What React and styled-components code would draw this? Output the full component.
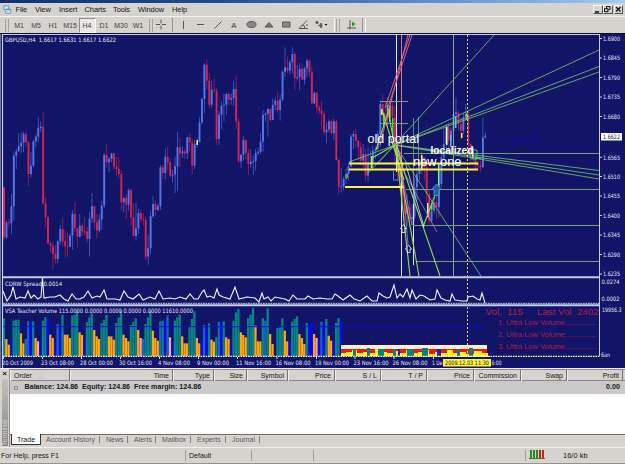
import React from 'react';
import styled, { createGlobalStyle } from 'styled-components';

// candles: close, high, low measured in thirds of a pixel below the pane top
const CANDLES = `610,460,620 565,560,615 568,555,580 517,480,600 365,355,560 352,345,405 337,297,352
326,295,358 300,293,355 325,293,338 420,320,455 395,355,430 322,318,400 308,300,340 282,250,325
278,262,295 508,235,512 550,490,580 628,545,630 635,625,655 660,622,705 675,632,690 622,620,688
585,573,632 622,550,637 637,590,668 638,598,668 605,597,640 540,528,647 583,503,595 608,582,640
575,540,612 592,568,605 592,550,605 615,578,627 553,533,668 517,478,567 565,515,585 590,540,612
557,540,595 515,500,587 363,357,522 385,328,400 375,368,415 358,357,385 398,357,405 405,368,425
420,370,433 505,408,530 492,490,535 512,480,555 468,463,530 550,463,575 606,507,608 583,507,620
537,525,600 555,527,565 558,537,575 668,547,678 643,603,692 547,530,660 510,487,552 528,500,545
517,508,532 400,393,528 417,392,435 368,343,437 385,338,410 425,373,430 422,407,445 397,368,477
340,293,470 358,312,400 352,337,372 358,343,375 310,308,375 325,297,352 395,315,420 330,318,405
325,313,342 265,250,318 195,192,272 92,88,237 140,76,165 212,117,222 167,140,220 170,135,178
315,162,332 242,230,333 215,202,285 212,180,262 180,178,242 197,175,212 192,178,212 165,140,215
262,124,285 382,255,385 362,360,402 318,305,380 357,317,375 390,345,423 383,345,400 382,365,423
357,345,410 353,342,363 323,298,360 243,228,353 240,233,262 225,222,308 258,225,263 213,193,243
200,190,228 228,173,237 197,183,260 113,110,202 100,40,128 110,68,117 85,78,122 60,40,118
132,54,166 130,93,140 105,87,168 137,90,138 103,98,152 80,72,130 115,77,130 208,98,210
177,172,210 220,173,237 230,213,240 240,202,285 295,232,302 287,265,328 262,257,295 298,257,302
262,255,318 378,258,380 458,375,482 457,403,475 435,428,470 420,403,450 398,385,440 308,300,400
300,290,345 320,285,340 340,318,380 380,325,395 360,330,400 425,345,440 390,340,445 385,350,405
350,335,400 345,338,375 300,290,350 210,200,340 240,182,260 250,205,270 220,190,280 215,200,250
250,205,310 330,215,400 400,300,440 440,340,470 500,400,530 540,460,560 520,480,575 555,500,580
550,510,575 460,430,560 420,400,500 390,375,440 370,350,420 400,370,440 480,390,510 560,470,570
530,500,565 505,490,540 520,470,555 450,400,550 370,350,460 330,280,380 280,270,350 320,265,345
290,280,350 240,225,320 235,190,260 270,230,290 290,250,315 250,235,300 240,210,260 330,230,350
360,325,385 375,350,390 385,360,405 395,380,410 400,380,412 310,250,400 305,295,315`
  .split(/\s+/)
  .map(c => c.split(',').map(Number));

// t teal, o orange, b blue, d dodger, s salmon
const VOLUME = `t133 o195 o212 b195 t140 t137 t137 o178 o208 d195 d142 b142 t142 o192 s202 b195 t140 t130
b133 o182 o192 b200 d150 b155 t122 o182 o182 o192 t125 t122 t110 o175 o183 b195 t145 t130 t118
o168 o187 o195 t148 t138 t122 o187 o187 o197 t147 t130 t108 o182 o192 o202 t153 t143 t133 o168
s192 d195 t150 t130 t110 o170 o192 o200 d142 t140 b140 d125 s190 b200 t140 t130 t122 o187 o208
o208 t157 t135 t112 o192 o208 b195 d153 b160 t148 o197 o203 t190 d143 b145 t142 o190 o195 b200
t140 t115 t105 o175 o183 o190 t132 t122 t102 o155 o202 o202 t133 d140 t103 o180 o210 b245 t162
t160 t133 o170 o202 b200 t143 t135 t127 o180 o192 o210 t147 b147 b147 o180 s192 b195 d143 b147
t135 o185 o200 b200 t147 t132 b142`.split(/\s+/);

const VOLUME_COLORS = { t: '#058585', o: '#ffa60b', b: '#0707f4', d: '#1467c6', s: '#ffaa83' };

const SPREAD = `3,291 7,301 11,295 13,287 16,299 20,297 25,298 28,291 31,298 34,295 38,299 41,297
42.5,278 44,298 50,297 55,297 60,295 64,299 68,301 72,294 76,299 80,299 84,297 88,291 92,298
97,296 100,297 104,290 107,299 115,299 120,300 124,291 128,297 133,299 139,294 143,300 150,297
155,299 159,291 163,299 170,298 175,299 180,297 186,299 190,294 194,299 198,299 202,292 204,290
207,297 210,296 214,298 217,289 219,295 223,297 230,299 235,287 239,299 247,297 255,298 259,302
262,293 264,299 268,297 271,301 275,297 280,298 285,299 289,301 293,295 297,299 305,299 308,296
313,299 320,298 327,299 332,299 335,294 338,296 343,300 350,295 354,299 360,301 367,296 372,301
377,301 379,293 383,296 387,298 390,297 394,285 397,298 400,294 403,297 407,289 410,298 412,290
416,299 420,295 424,296 430,300 435,299 437,290 441,298 445,300 450,301 452,294 455,300 462,301
467,301 468,297 473,296 477,299 480,300 482,293 485,303`;

const PRICES = [
  ['1.6900', 38.5], ['1.6845', 58], ['1.6790', 77.5], ['1.6735', 97], ['1.6680', 116.5],
  ['1.6565', 157.3], ['1.6510', 176.5], ['1.6455', 196], ['1.6400', 215.5], ['1.6345', 235],
  ['1.6290', 254.5], ['1.6235', 274],
];

const DATES = [
  ['20 Oct 2009', 2, 31], ['23 Oct 08:00', 41, 33], ['28 Oct 00:00', 80, 33],
  ['30 Oct 16:00', 119, 33], ['4 Nov 08:00', 158, 32], ['9 Nov 00:00', 197, 32],
  ['11 Nov 16:00', 236, 35], ['16 Nov 08:00', 275.5, 35], ['19 Nov 00:00', 315, 34],
  ['23 Nov 16:00', 353.5, 35], ['26 Nov 08:00', 392.5, 35], ['1 De', 432, 10.5],
];

const GREEN_RAYS = [
  'M378 163L494 35', 'M395 145L599 50', 'M395 145L599 66.5', 'M395 145L599 72',
  'M395 145L599 170.5', 'M395 145L599 175', 'M395 145L599 179', 'M395 145L367 174',
  'M395 145L349 162', 'M395 145L481 276',
];

const STEEP_RAYS = [
  'M396 148L410 276', 'M396 148L419 276', 'M396 148L440 276', 'M382 110L404 180',
  'M387 105L399 170', 'M423 227L437 190', 'M395 145L372 158', 'M390 106L376 150',
];

const LEVELS = [
  [380, 101.5, 408], [380, 123.5, 408], [404, 153.5, 599], [406, 189.5, 599],
  [413, 225.5, 599], [417, 261.5, 599],
];

const HIGHLIGHTS = [
  [196.5, 140, 5, '#f0ff9a'], [346.5, 174, 4, '#22df20'], [371, 156, 12, '#a7ff22'],
  [381, 109, 6, '#f6f632'], [383, 113, 13, '#52e23a'], [389, 107, 15, '#b7ee1a'],
  [392, 118, 18, '#63d32b'], [421, 155, 15, '#f7f35e'], [427, 203, 14, '#dff2c3'],
  [431, 203, 7, '#5ee32c'], [438, 163, 22, '#82ed9b'], [446, 127, 18, '#f0f7ff'],
  [450, 135, 12, '#39c6ee'], [455, 116, 12, '#22e4e0'], [461, 133, 5, '#ffe93a'],
  [466, 113, 7, '#55df39'], [472, 148, 10, '#e6fff2'],
];

const candleX = i => 4 + i * 2.443;
const candleY = v => 34 + v / 3;

const App = () => (
  <>
    <GlobalStyle/>
    <Window>
      <TitleBar/>
      <MenuBar>
        <MenuIcon/>
        <MenuItem width={19.5}>File</MenuItem>
        <MenuItem width={24}>View</MenuItem>
        <MenuItem width={25.5}>Insert</MenuItem>
        <MenuItem width={28.5}>Charts</MenuItem>
        <MenuItem width={25}>Tools</MenuItem>
        <MenuItem width={34}>Window</MenuItem>
        <MenuItem width={30}>Help</MenuItem>
        <WindowControls/>
      </MenuBar>
      <Toolbar/>
      <ChartWindow/>
      <Terminal/>
      <StatusBar/>
    </Window>
  </>
);

export default App;

const MenuIcon = () => (
  <MenuLogo viewBox="0 0 11 10">
    <path d="M1 .5h6v5H1z" fill="#d8eefa" stroke="#4a8bc0"/>
    <path d="M3.500 4.500h6v5h-6z" fill="#eefaff" stroke="#4a8bc0"/>
    <path d="M4 5h5" stroke="#4a8bc0"/>
    <path d="M5 8l1.500-2 1 1.500L9 6.500" fill="none" stroke="#60a080" strokeWidth=".7"/>
  </MenuLogo>
);

const WindowControls = () => (
  <Controls>
    <Control><svg width="9" height="9"><path d="M2 7h4" stroke="#111" strokeWidth="1.500"/></svg></Control>
    <Control>
      <svg width="9" height="9" fill="none" stroke="#111">
        <path d="M3.500 4V1.500h3.500v3H5.500M1.500 3.700h3.500v3H1.500z"/>
      </svg>
    </Control>
    <Control gap><svg width="9" height="9"><path d="M2 2l4.500 4.500M6.500 2L2 6.500" stroke="#111" strokeWidth="1.200"/></svg></Control>
  </Controls>
);

const Toolbar = () => (
  <Tools>
    <Grip/>
    {['M1', 'M5', 'H1', 'M15', 'H4', 'D1', 'M30', 'W1'].map(p => (
      <Period key={p} active={p === 'H4'}>{p}</Period>
    ))}
    <Grip left={2}/>
    <Tool width={17}><path d="M-1 5.500h4M5 5.500h4M4 .5v4M4 6.500v4"/></Tool>
    <Divider/>
    <Tool width={21}><path d="M6.500 2v8"/></Tool>
    <Tool width={14}><path d="M-1 5.500h7"/></Tool>
    <Tool width={20}><path d="M2.500 9.500l7-7"/></Tool>
    <Letter>A</Letter>
    <Tool width={18}><ellipse cx="6.500" cy="5.500" rx="4.500" ry="3" fill="#888"/></Tool>
    <Tool width={17}><path d="M2 8l4-4.500L10 8z" fill="#777"/></Tool>
    <Tool width={17}><path d="M2.500 3h7.500v5H2.500z" fill="#888"/></Tool>
    <Tool width={17}><path d="M10 1.500L2 9.500h9M5 6q3 0 3 3.500M9 6h2" fill="none"/></Tool>
    <Tool width={22}>
      <path d="M1.500 3.500h3M3 2v3M4.500 6.500h4M7 4v5" strokeWidth="1.600"/>
      <path d="M10.500 5h3L12 6.800z" fill="#111" stroke="none"/>
    </Tool>
    <Divider light/>
    <Grip/>
    <Tool width={19}>
      <path d="M5 1v9.500M2 9h9"/>
      <path d="M7 2.500L10.500 5 7 7.500z" fill="#1f9d31" stroke="none"/>
    </Tool>
    <Divider/>
    <Divider light/>
  </Tools>
);

const Tool = ({ width, children }) => (
  <ToolButton width={width}>
    <svg width="14" height="12" viewBox="0 0 14 12" stroke="#555" strokeWidth="1">{children}</svg>
  </ToolButton>
);

const ChartWindow = () => (
  <Chart viewBox="0 33 625 335">
    <rect y="33" width="625" height="335" fill="#111467"/>
    <path d="M0 33.500h625" stroke="#080a3c"/>
    <path d="M.5 34v334" stroke="#6d748f"/>
    <Candles/>
    <Drawings/>
    <Spread/>
    <Volume/>
    <g stroke="#c4cfec" fill="none">
      <path d="M2.500 368V34.500H599.500" strokeWidth="1.200"/>
      <path d="M599.500 34V356.500"/>
      <path d="M2 277.300H599M2 305.300H599" strokeWidth="2"/>
    </g>
    <PriceScale/>
    <TimeScale/>
    <ChartText x="5" y="41.500" textLength="111">GBPUSD,H4&nbsp; 1.6617 1.6631 1.6617 1.6622</ChartText>
  </Chart>
);

const Candles = () => (
  <g>
    {CANDLES.map(([close, high, low], i) => {
      const open = i ? CANDLES[i - 1][0] : 460;
      const x = candleX(i);
      const up = close < open;
      return (
        <g key={i} fill={up ? '#5577ea' : '#d32453'}>
          <rect x={x - .35} y={candleY(high)} width=".8" height={(low - high) / 3} opacity=".75"/>
          <rect x={x - .9} y={candleY(Math.min(open, close))} width="1.900" height={Math.max(1, Math.abs(close - open) / 3)}/>
        </g>
      );
    })}
    {HIGHLIGHTS.map(([x, y, h, fill]) => (
      <rect key={x} x={x} y={y} width="1.500" height={h} fill={fill}/>
    ))}
  </g>
);

const Drawings = () => (
  <g fill="none">
    <path d="M453.500 35V276" stroke="#8ba6a4"/>
    <path d="M396.500 35V172M401.500 172V276M413.500 204V265" stroke="#dfe5f4"/>
    <path d="M401.500 35V172" stroke="#d27590"/>
    <path d="M413.500 118V204M418.500 117V170" stroke="#7ba888" strokeWidth=".8"/>
    {LEVELS.map(([x1, y, x2]) => (
      <path key={y} d={`M${x1} ${y}H${x2}`} stroke="#74a079"/>
    ))}
    {GREEN_RAYS.map(d => <path key={d} d={d} stroke="#79bd6c" strokeWidth=".85"/>)}
    {STEEP_RAYS.map(d => <path key={d} d={d} stroke="#93e34c" strokeWidth="1.100"/>)}
    <path d="M380 145L408 35M388 107L412 35M385 108L410 35" stroke="#e56d76" strokeWidth=".9"/>
    <path d="M400 165L412 225M402 170L408 245M404 172L437 232" stroke="#d2909a" strokeWidth=".7"/>
    <path d="M406 165L424 227M397 146L403 166" stroke="#e2ecd0" strokeWidth=".8"/>
    <path d="M467.500 35V276" stroke="#e6e04e" strokeDasharray="2 2"/>
    <path d="M349 163.500H478M349 169.500H478M345 187H403.500" stroke="#fff238" strokeWidth="1.800"/>
    <g strokeWidth=".9">
      <path d="M403.500 224.500l3 4h-1.500v4h-3v-4h-1.500zM408.500 245l3 4H410v3.500h-3V249h-1.500z" stroke="#e9dfe6"/>
      <path d="M436.500 184l5 5.500h-2.500v6h-5v-6h-2.500z" stroke="#3ca2c3" fill="#245d9b"/>
      <path d="M393.500 171v9h9" stroke="#4aa6d8"/>
      <path d="M469 150h8v9h-6z" stroke="#35d19b"/>
    </g>
    <path d="M475 158h6" stroke="#45d965" strokeWidth="1.800"/>
    <Label x="367.500" y="143" textLength="51.500" size={12}>old portal</Label>
    <Label x="430.500" y="153.500" textLength="43" size={10} heavy>localized</Label>
    <Label x="413" y="166" textLength="48.500" size={12}>new one</Label>
    <TimerText x="500" y="141.500" textLength="38">{'< - -2:06:28'}</TimerText>
  </g>
);

const Spread = () => (
  <g>
    <polyline points={SPREAD} fill="none" stroke="#f2f4ff" strokeWidth="1.100"/>
    <path d="M3 303.300H599" stroke="#e7e9f6" strokeWidth=".9" strokeDasharray="1.800 .7"/>
    <path d="M467.500 279V303" stroke="#e6e04e" strokeDasharray="2 2"/>
    <ChartText x="5" y="286" textLength="57">CDRW Spread 0.0014</ChartText>
  </g>
);

const Volume = () => (
  <g>
    {VOLUME.map((bar, i) => {
      const y = 274 + bar.slice(1) / 3;
      return (
        <rect key={i} x={candleX(i) - 1.3} y={y} width="2.300" height={356 - y} fill={VOLUME_COLORS[bar[0]]}/>
      );
    })}
    <path d="M3 326.700H484" stroke="#0b10c8"/>
    <rect x="341" y="345" width="146" height="4" fill="#fff0cc"/>
    <rect x="341" y="349" width="146" height="7" fill="#f5130d"/>
    <path
      d="M341 356v-3h5v-1h6v-2h5v3h6v-1h7v1h5v-4h4v3h8v1h6v-2h6v2h7v-3h6v3h6v-1h7v-2h4v4h6v-2h5v1h7v-3h6v3h6v-1h7v2h8v-3h8v2h6v4z"
      fill="#f8f51a"
    />
    <path
      d="M353 350h3v6h-3zM367 348h3v8h-3zM378 349h6v7h-6zM393 349h3v7h-3zM407 349h7v7h-7zM422 348h6v8h-6zM457 349h3v7h-3zM469 348h4v8h-4z"
      fill="#078080"
    />
    <path d="M398 349h2v7h-2zM437 349h4v7h-4z" fill="#1b21c7"/>
    <path d="M3 356.300H599" stroke="#f6f6ff" strokeWidth="1.200" strokeDasharray="1.700 .8"/>
    <path d="M467.500 307V356" stroke="#e6e04e" strokeDasharray="2 2"/>
    <ChartText x="5" y="313.300" textLength="188">
      VSA Teacher Volume 115.0000 0.0000 0.0000 0.0000 0.0000 11610.0000
    </ChartText>
    <VolumeText x="485.500" y="314.500" textLength="37.500" size={9.5}>Vol.&nbsp; 115</VolumeText>
    <VolumeText x="537" y="314.500" textLength="61.500" size={9.5}>Last Vol&nbsp; 2402</VolumeText>
    {[1, 2, 3].map(n => (
      <g key={n}>
        <VolumeText x="498" y={313 + n * 12.1} textLength="67" size={7.5}>{n}. Ultra Low Volume</VolumeText>
        <VolumeText x="565.500" y={313 + n * 12.1} textLength="31" size={7.5}>................</VolumeText>
      </g>
    ))}
  </g>
);

const PriceScale = () => (
  <g>
    {PRICES.map(([price, y]) => (
      <g key={price}>
        <path d={`M600 ${y}h2`} stroke="#cdd3ea"/>
        <ChartText x="603" y={y + 2.3} textLength="17">{price}</ChartText>
      </g>
    ))}
    <rect x="601" y="133" width="21" height="7.500" fill="#fff"/>
    <ChartText x="603" y="139" textLength="17" dark>1.6622</ChartText>
    <ChartText x="601.500" y="284" textLength="18">0.0274</ChartText>
    <ChartText x="601.500" y="301" textLength="18">0.0002</ChartText>
    <ChartText x="602" y="311.500" textLength="19.500">19956.3</ChartText>
    <ChartText x="601" y="356.500" textLength="9">6an</ChartText>
  </g>
);

const TimeScale = () => (
  <g>
    {DATES.map(([date, x, width]) => (
      <g key={date}>
        <path d={`M${x + 1.5} 357v2`} stroke="#d9ddf0"/>
        <ChartText x={x} y="365" textLength={width}>{date}</ChartText>
      </g>
    ))}
    <ChartText x="491.500" y="365" textLength="10">6:00</ChartText>
    <rect x="443" y="359" width="48" height="7.500" fill="#fff333"/>
    <ChartText x="445" y="365" textLength="44" dark>2009.12.03 11:30</ChartText>
  </g>
);

const Terminal = () => (
  <TerminalPanel>
    <TerminalSide>
      <Close>×</Close>
      <SideTitle>Terminal</SideTitle>
    </TerminalSide>
    <TerminalBody>
      <Header>
        <Column first>Order <Sort>△</Sort></Column>
        <Column>Time</Column>
        <Column>Type</Column>
        <Column>Size</Column>
        <Column>Symbol</Column>
        <Column>Price</Column>
        <Column>S / L</Column>
        <Column>T / P</Column>
        <Column>Price</Column>
        <Column>Commission</Column>
        <Column>Swap</Column>
        <Column>Profit</Column>
      </Header>
      <Balance>
        <Dot/>
        <BalanceText>{'Balance: 124.86  Equity: 124.86  Free margin: 124.86'}</BalanceText>
        <span>0.00</span>
      </Balance>
      <Orders/>
      <Tabs>
        <ActiveTab>Trade</ActiveTab>
        <Tab width={60}>Account History</Tab>
        <Tab width={28}>News</Tab>
        <Tab width={28}>Alerts</Tab>
        <Tab width={35}>Mailbox</Tab>
        <Tab width={35}>Experts</Tab>
        <Tab width={34}>Journal</Tab>
      </Tabs>
    </TerminalBody>
  </TerminalPanel>
);

const StatusBar = () => (
  <Status>
    <StatusCell width={185}>For Help, press F1</StatusCell>
    <StatusCell width={66} line>Default</StatusCell>
    <StatusCell width={62} line/>
    <StatusCell width={212} line/>
    <StatusCell width={23} line>
      <svg width="16" height="9">
        <path d="M2 0v8M5 0v8M8 0v8" stroke="#258c2c" strokeWidth="2"/>
        <path d="M11 0v8M14 0v8" stroke="#b32a23" strokeWidth="2"/>
        <path d="M0 8.500h16" stroke="#66623c"/>
      </svg>
    </StatusCell>
    <Traffic>16/0 kb</Traffic>
  </Status>
);

const GlobalStyle = createGlobalStyle`
  body {
    margin: 0;
    background: #fff;
    overflow: hidden;
  }
  * {
    box-sizing: border-box;
  }
`

const Window = styled.div`
  width: 625px;
  height: 469px;
  display: flex;
  flex-direction: column;
  font-family: "Liberation Sans", Arial, sans-serif;
  font-size: 7px;
  line-height: 9px;
  color: #151515;
  white-space: nowrap;
`

const TitleBar = styled.div`
  height: 3px;
  flex: none;
  background: linear-gradient(90deg, #13316f 0, #254b8b 35%, #6590ce 70%, #a7c8f0 100%);
`

const MenuBar = styled.div`
  height: 13px;
  flex: none;
  display: flex;
  align-items: center;
  background: #d6d3ce;
  padding-left: 3px;
`

const MenuLogo = styled.svg`
  width: 9px;
  height: 9px;
  margin-right: 3.5px;
`

const MenuItem = styled.div`
  width: ${props => props.width}px;
  font-size: 7.5px;
  letter-spacing: -0.1px;
`

const Controls = styled.div`
  display: flex;
  margin-left: auto;
  padding-right: 2px;
`

const Control = styled.div`
  width: ${props => props.gap ? 9 : 10}px;
  height: 9px;
  margin-left: ${props => props.gap ? 1 : 0}px;
  border: 1px solid;
  border-color: #f8f8f8 #55534f #55534f #f8f8f8;
  background: #d6d3ce;
  svg {
    display: block;
    margin: -1px;
  }
`

const Tools = styled.div`
  height: 17px;
  flex: none;
  display: flex;
  align-items: center;
  padding-left: 5px;
  background: #d6d3ce;
  border-top: 1px solid #f4f3f0;
`

const Grip = styled.div`
  width: 4px;
  height: 13px;
  flex: none;
  margin-right: 1.5px;
  margin-left: ${props => props.left || 0}px;
  border: 1px solid #a5a29d;
  border-width: 0 1px;
`

const Period = styled.div`
  width: 17px;
  height: 15px;
  line-height: 15px;
  flex: none;
  text-align: center;
  color: #44423f;
  ${props => props.active ? `
    background: #eceae6;
    border: 1px solid;
    border-color: #918e89 #fff #fff #918e89;
    line-height: 13px;
  ` : ''}
`

const ToolButton = styled.div`
  width: ${props => props.width}px;
  height: 12px;
  flex: none;
  padding-left: 3px;
  svg {
    display: block;
    overflow: visible;
  }
`

const Letter = styled.div`
  width: 13px;
  padding-left: 2px;
  font-size: 8px;
  font-weight: bold;
  color: #666;
`

const Divider = styled.div`
  width: 1px;
  height: 14px;
  flex: none;
  margin: 0 1px;
  background: ${props => props.light ? '#f8f7f4' : '#96938e'};
`

const Chart = styled.svg`
  width: 625px;
  height: 335px;
  flex: none;
  display: block;
`

const ChartText = styled.text.attrs({ lengthAdjust: 'spacingAndGlyphs' })`
  font-family: "DejaVu Sans", sans-serif;
  font-size: 6px;
  fill: ${props => props.dark ? '#15151f' : '#e6e9f6'};
`

const Label = styled.text.attrs({ lengthAdjust: 'spacingAndGlyphs' })`
  font-size: ${props => props.size}px;
  font-weight: ${props => props.heavy ? 'bold' : 'normal'};
  fill: #fff;
`

const TimerText = styled.text.attrs({ lengthAdjust: 'spacingAndGlyphs' })`
  font-size: 7px;
  fill: #0b0bb1;
`

const VolumeText = styled.text.attrs({ lengthAdjust: 'spacingAndGlyphs' })`
  font-size: ${props => props.size}px;
  fill: #b81a46;
`

const TerminalPanel = styled.div`
  height: 79px;
  flex: none;
  display: flex;
  background: #d6d3ce;
  border-top: 1px solid #f2f1ee;
`

const TerminalSide = styled.div`
  width: 9px;
  display: flex;
  flex-direction: column;
`

const Close = styled.div`
  height: 10px;
  font-size: 8px;
  font-weight: bold;
  text-align: center;
`

const SideTitle = styled.div`
  flex: 1;
  margin: 0 1px 1px 2px;
  background: linear-gradient(#858585, #c2c1bf);
  color: #d4d2cf;
  writing-mode: vertical-rl;
  transform: rotate(180deg);
  line-height: 6px;
`

const TerminalBody = styled.div`
  flex: 1;
  display: flex;
  flex-direction: column;
  border-left: 1px solid #8f8c88;
`

const Header = styled.div`
  height: 12px;
  display: grid;
  grid-template-columns: 60px 103px 41px 33px 41px 47px 46px 46px 47px 47px 46px 56px;
  border-top: 1px solid #8c8985;
  border-bottom: 1px solid #8c8985;
`

const Column = styled.div`
  text-align: ${props => props.first ? 'left' : 'right'};
  padding: 1px 3px 0;
  border-right: 1px solid #74716d;
  border-left: 1px solid #f5f4f1;
`

const Sort = styled.span`
  color: #aaa;
  font-size: 6px;
  margin-left: 4px;
`

const Balance = styled.div`
  height: 13px;
  display: flex;
  align-items: center;
  background: #cac8ca;
  font-size: 7.15px;
  font-weight: bold;
  padding: 0 5px 0 4px;
`

const Dot = styled.div`
  width: 4px;
  height: 4px;
  border: 1px solid #89878a;
  border-radius: 1px;
`

const BalanceText = styled.div`
  flex: 1;
  margin-left: 6.5px;
  white-space: pre;
`

const Orders = styled.div`
  flex: 1;
  background: #fff;
`

const Tabs = styled.div`
  height: 13px;
  display: flex;
  border-top: 1px solid #6f6d69;
  color: #5a5854;
`

const ActiveTab = styled.div`
  width: 30px;
  height: 11px;
  margin: -1px 0 0 1px;
  padding: 1px 0 0 5px;
  background: #fff;
  color: #111;
  border: 1px solid #333;
  border-top: 0;
`

const Tab = styled.div`
  width: ${props => props.width}px;
  padding: 0 0 0 5px;
  position: relative;
  &::after {
    content: '';
    position: absolute;
    right: 1px;
    top: 1px;
    height: 7px;
    border-right: 1px solid #85827e;
  }
`

const Status = styled.div`
  height: 17px;
  flex: none;
  display: flex;
  align-items: center;
  background: #d6d3ce;
  border-top: 1px solid #f1f0ed;
  border-bottom: 1px solid #96938f;
`

const StatusCell = styled.div`
  width: ${props => props.width}px;
  height: 11px;
  line-height: 11px;
  flex: none;
  padding-left: ${props => props.line ? 3 : 1}px;
  border-left: ${props => props.line ? '1px solid #a19e99' : 0};
`

const Traffic = styled.div`
  padding-left: 15px;
  font-size: 7.5px;
`
